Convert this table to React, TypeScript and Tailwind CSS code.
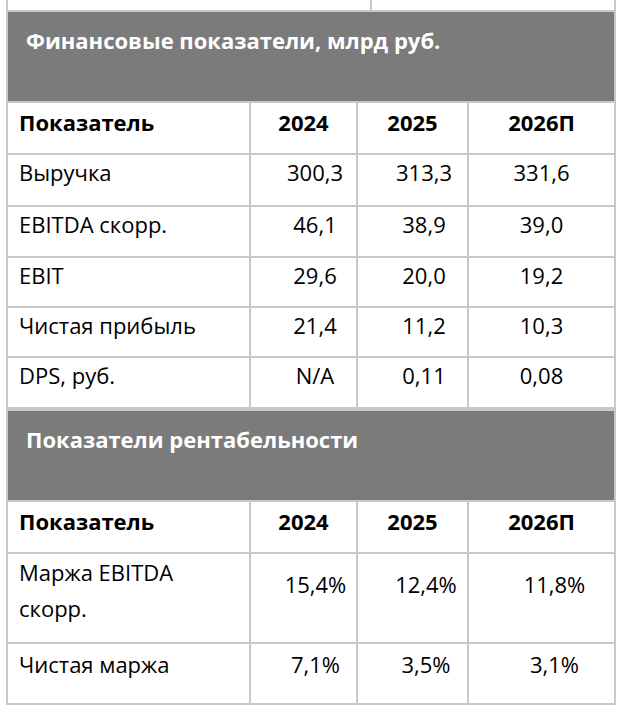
const font = { fontFamily: '"Open Sans", "Lato", sans-serif' }

type Row = {
  label: React.ReactNode
  values: string[]
  h: string
  labelPad: string
  valuePad: string
}

const finance: Row[] = [
  { label: 'Выручка', values: ['300,3', '313,3', '331,6'], h: 'h-[50px]', labelPad: 'pt-[6px]', valuePad: 'pt-[6px]' },
  { label: 'EBITDA скорр.', values: ['46,1', '38,9', '39,0'], h: 'h-[49px]', labelPad: 'pt-[6px]', valuePad: 'pt-[6px]' },
  { label: 'EBIT', values: ['29,6', '20,0', '19,2'], h: 'h-[48px]', labelPad: 'pt-[6px]', valuePad: 'pt-[6px]' },
  { label: 'Чистая прибыль', values: ['21,4', '11,2', '10,3'], h: 'h-[48px]', labelPad: 'pt-[6px]', valuePad: 'pt-[6px]' },
  { label: 'DPS, руб.', values: ['N/A', '0,11', '0,08'], h: 'h-[49px]', labelPad: 'pt-[6px]', valuePad: 'pt-[6px]' },
]

const margins: Row[] = [
  {
    label: (
      <>
        Маржа EBITDA
        <br />
        скорр.
      </>
    ),
    values: ['15,4%', '12,4%', '11,8%'],
    h: 'h-[88px]',
    labelPad: 'pt-0',
    valuePad: 'pt-[19px]',
  },
  { label: 'Чистая маржа', values: ['7,1%', '3,5%', '3,1%'], h: 'h-[59px]', labelPad: 'pt-[9px]', valuePad: 'pt-[9px]' },
]

const cols = 'grid grid-cols-[241px_105px_109px_1fr] gap-[2px]'

function Section({ title, rows, valueShift }: { title: string; rows: Row[]; valueShift: string[] }) {
  return (
    <div className="bg-[#c8c8c8] p-[2px] flex flex-col gap-[2px]">
      <div className="h-[89px] bg-[#7b7b7b] text-white font-bold text-[22px] leading-none pl-[18px] pt-[17px]">
        {title}
      </div>
      <div className={`${cols} h-[50px] font-bold text-[22px] leading-none text-black`}>
        <div className="bg-white pl-[11px] pt-[8px]">Показатель</div>
        <div className="bg-white text-center pt-[8px]">2024</div>
        <div className="bg-white text-center pt-[8px]">2025</div>
        <div className="bg-white text-center pt-[8px]">2026П</div>
      </div>
      {rows.map((r, i) => (
        <div key={i} className={`${cols} ${r.h} text-[22px] text-black`}>
          <div className={`bg-white pl-[11px] leading-[36px] ${r.labelPad}`}>
            {typeof r.label === 'string' ? <span className="block leading-none">{r.label}</span> : r.label}
          </div>
          {r.values.map((v, j) => (
            <div key={j} className={`bg-white text-center leading-none ${r.valuePad} ${valueShift[j]}`}>
              {v}
            </div>
          ))}
        </div>
      ))}
    </div>
  )
}

export default function App() {
  return (
    <div className="w-[630px] h-[718px] bg-white overflow-hidden" style={font}>
      <div className="ml-[6px] w-[610px]">
        <div className="h-[10px] flex border-l-2 border-r-2 border-[#c8c8c8]">
          <div className="w-[364px] border-r-2 border-[#c8c8c8]" />
        </div>
        <Section
          title="Финансовые показатели, млрд руб."
          rows={finance}
          valueShift={['pl-[23px]', 'pl-[23px]', 'pl-0']}
        />
        <Section
          title="Показатели рентабельности"
          rows={margins}
          valueShift={['pl-[24px]', 'pl-[27px]', 'pl-[26px]']}
        />
      </div>
    </div>
  )
}
